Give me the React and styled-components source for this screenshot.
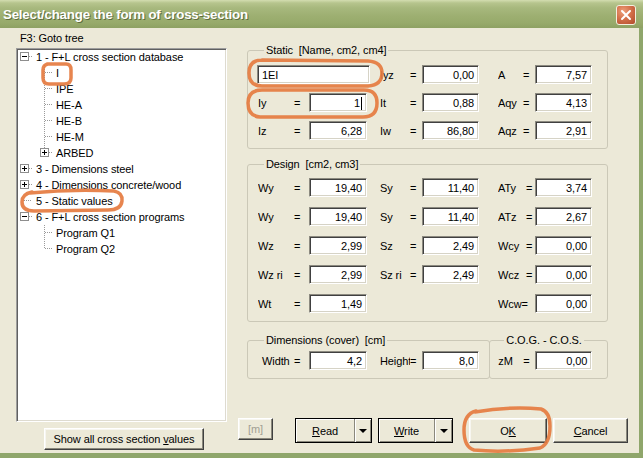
import React from 'react';
import styled, { createGlobalStyle } from 'styled-components';

const FONT = "'Liberation Sans', Arial, sans-serif";

const Global = createGlobalStyle`
  html, body { margin: 0; padding: 0; background: #ece9d8; overflow: hidden; }
  body { font-family: ${FONT}; font-size: 11px; letter-spacing: -0.1px; color: #000; }
  #root { width: 643px; height: 458px; }
  *, *::before, *::after { box-sizing: border-box; }
`;

const Window = styled.div`
  position: relative;
  width: 643px;
  height: 458px;
  display: flex;
  flex-direction: column;
  background: #ece9d8;
  overflow: hidden;
`;

const TitleBar = styled.div`
  height: 28px;
  flex: none;
  display: flex;
  align-items: center;
  justify-content: space-between;
  padding: 0 6px 0 3px;
  background: linear-gradient(to bottom, #d3ddb0 0px, #b6c48d 3px, #a7b87d 8px, #9daf71 16px, #97aa6b 23px, #8ea163 28px);
`;

const Title = styled.span`
  color: #fff;
  font-family: 'Liberation Sans', Arial, sans-serif;
  font-weight: bold;
  font-size: 13.3px;
  letter-spacing: -0.2px;
  text-shadow: 1px 1px 0 #5e6d3e;
  padding-top: 1px;
`;

const CloseBtn = styled.div`
  width: 20px;
  height: 20px;
  margin-top: 2px;
  margin-right: 1px;
  border: 1px solid #f3efe0;
  border-radius: 3px;
  background: radial-gradient(circle at 35% 30%, #eea07c 0%, #d4714b 45%, #b14a2b 100%);
  display: flex;
  align-items: center;
  justify-content: center;
`;

const Frame = styled.div`
  flex: 1;
  display: flex;
  border-right: 4px solid #8fa66b;
  border-bottom: 5px solid #8fa66b;
  min-height: 0;
`;

/* ---------- left column ---------- */

const LeftCol = styled.div`
  width: 227px;
  flex: none;
  padding: 3px 0 0 16px;
  display: flex;
  flex-direction: column;
`;

const TreeLabel = styled.div`
  padding-left: 4px;
  height: 17px;
  line-height: 15px;
`;

const TreeBox = styled.div`
  width: 211px;
  height: 374px;
  background: #fff;
  border: 1px solid;
  border-color: #9d9d9d #fff #fff #9d9d9d;
  box-shadow: inset 1px 1px 0 #606060, inset -1px -1px 0 #dedbd0;
  padding: 0 1px 1px 1px;
`;

const TreeRow = styled.div`
  display: flex;
  align-items: center;
  height: 16px;
  padding-left: ${p => p.$level * 20}px;
  white-space: nowrap;
`;

const TreeText = styled.span`
  margin-left: 4px;
  line-height: 16px;
`;

const RaisedButton = styled.div`
  display: flex;
  align-items: center;
  justify-content: center;
  background: #ece9d8;
  border: 1px solid;
  border-color: #fff #404040 #404040 #fff;
  box-shadow: inset -1px -1px 0 #8a887c, inset 1px 1px 0 #f7f6f0;
  white-space: nowrap;
  color: ${p => (p.$disabled ? '#a19f94' : '#000')};
  width: ${p => p.$w}px;
  height: ${p => p.$h}px;
  margin-left: ${p => p.$ml || 0}px;
`;

const ShowAllButton = styled(RaisedButton)`
  margin-top: 6px;
  margin-left: 28px;
`;

/* ---------- right column ---------- */

const RightCol = styled.div`
  flex: 1;
  margin-left: 11px;
  padding-top: 15px;
  display: flex;
  flex-direction: column;
`;

const Groups = styled.div`
  padding-left: 9px;
  width: 370px;
  display: flex;
  flex-direction: column;
`;

const Group = styled.fieldset`
  margin: ${p => p.$mt || 0}px 0 0 ${p => p.$ml || 0}px;
  padding: ${p => p.$pt}px 0 ${p => p.$pb}px ${p => p.$pl || 10}px;
  width: ${p => p.$w || 361}px;
  min-width: 0;
  border: 1px solid #cbc8b7;
  border-radius: 3px;
`;

const Legend = styled.legend`
  padding: 0 2px;
  margin-left: 6px;
  line-height: 14px;
  white-space: pre;
`;

const Rows = styled.div`
  display: flex;
  flex-direction: column;
  gap: ${p => p.$gap}px;
`;

const Row = styled.div`
  display: grid;
  grid-template-columns: ${p => p.$cols};
  height: 19px;
  align-items: center;
`;

const Cell = styled.div`
  display: grid;
  grid-template-columns: ${p => p.$lw}px ${p => p.$iw}px;
  align-items: center;
`;

const Label = styled.div`
  display: flex;
  align-items: center;
  white-space: nowrap;
`;

const Name = styled.span`
  width: ${p => p.$w}px;
  flex: none;
  overflow: hidden;
  padding-left: ${p => p.$pl || 0}px;
`;

const Sunken = styled.div`
  height: 19px;
  background: #fff;
  border: 1px solid;
  border-color: #8c8a80 #fff #fff #8c8a80;
  box-shadow: inset 1px 1px 0 #404040, inset -1px -1px 0 #d6d3c6;
  display: flex;
  align-items: center;
  padding: 1px 4px 0 4px;
  white-space: nowrap;
`;

const ValueBox = styled(Sunken)`
  justify-content: flex-end;
`;

const NameBox = styled(Sunken)`
  width: 113px;
  margin-left: -1px;
  justify-content: flex-start;
`;

const Caret = styled.span`
  display: inline-block;
  width: 1px;
  height: 13px;
  background: #000;
  margin-left: 1px;
`;

const DimRow = styled.div`
  display: flex;
  margin-top: 11px;
`;

const ButtonRow = styled.div`
  display: flex;
  align-items: flex-start;
  margin-top: 39px;
`;

const Split = styled.div`
  display: flex;
  height: 25px;
  margin-left: ${p => p.$ml}px;
  border: 1px solid #000;
  background: #ece9d8;
  box-shadow: inset 1px 1px 0 #fff, inset -1px -1px 0 #8a887c;
`;

const SplitMain = styled.div`
  width: ${p => p.$w}px;
  display: flex;
  align-items: center;
  justify-content: center;
`;

const SplitArrow = styled.div`
  width: ${p => p.$w}px;
  display: flex;
  align-items: center;
  justify-content: center;
  border-left: 1px solid #8a887c;
  box-shadow: inset 1px 0 0 #fff;
`;

const Tri = styled.span`
  width: 0;
  height: 0;
  border-left: 4px solid transparent;
  border-right: 4px solid transparent;
  border-top: 4px solid #000;
`;

const Annotations = styled.svg`
  position: absolute;
  top: 0;
  left: 0;
  pointer-events: none;
`;

/* ---------- tree connector drawing ---------- */

function Connector({ kind }) {
  const dot = { stroke: '#9a9a9a', strokeWidth: 1, strokeDasharray: '1 1' };
  const hasBox = kind === 'plus' || kind === 'minus' || kind === 'elbowPlus';
  return (
    <svg width="14" height="16" style={{ flex: 'none', display: 'block' }}>
      {(kind === 'tee') && <line x1="6.5" y1="0" x2="6.5" y2="16" {...dot} />}
      {(kind === 'elbow' || kind === 'elbowPlus') && <line x1="6.5" y1="0" x2="6.5" y2="8" {...dot} />}
      {(kind === 'tee' || kind === 'elbow') && <line x1="7" y1="7.5" x2="14" y2="7.5" {...dot} />}
      {kind === 'stub' && <line x1="6" y1="7.5" x2="14" y2="7.5" {...dot} />}
      {hasBox && <line x1="11" y1="7.5" x2="14" y2="7.5" {...dot} />}
      {hasBox && (
        <g>
          <rect x="2.5" y="3.5" width="8" height="8" fill="#fff" stroke="#8e8e8e" />
          <line x1="4" y1="7.5" x2="9" y2="7.5" stroke="#000" />
          {(kind === 'plus' || kind === 'elbowPlus') && <line x1="6.5" y1="5" x2="6.5" y2="10" stroke="#000" />}
        </g>
      )}
    </svg>
  );
}

const treeItems = [
  { l: 0, k: 'minus', t: '1 - F+L cross section database' },
  { l: 1, k: 'tee', t: 'I' },
  { l: 1, k: 'tee', t: 'IPE' },
  { l: 1, k: 'tee', t: 'HE-A' },
  { l: 1, k: 'tee', t: 'HE-B' },
  { l: 1, k: 'tee', t: 'HE-M' },
  { l: 1, k: 'elbowPlus', t: 'ARBED' },
  { l: 0, k: 'plus', t: '3 - Dimensions steel' },
  { l: 0, k: 'plus', t: '4 - Dimensions concrete/wood' },
  { l: 0, k: 'stub', t: '5 - Static values' },
  { l: 0, k: 'minus', t: '6 - F+L cross section programs' },
  { l: 1, k: 'tee', t: 'Program Q1' },
  { l: 1, k: 'elbow', t: 'Program Q2' },
];

/* ---------- fields ---------- */

const COLS = [
  { nw: 36, lw: 51, iw: 58 },
  { nw: 30, lw: 42, iw: 57 },
  { nw: 25, lw: 37, iw: 57 },
];
const GRID3 = '122px 118px 94px';

function Field({ f, c }) {
  if (!f) return <div />;
  const col = COLS[c];
  return (
    <Cell $lw={col.lw} $iw={col.iw}>
      <Label>
        <Name $w={f.nw || col.nw} $pl={f.pl}>{f.n}</Name>
        {f.eq !== false && <span>=</span>}
      </Label>
      <ValueBox>
        {f.v}
        {f.caret && <Caret />}
      </ValueBox>
    </Cell>
  );
}

const staticRows = [
  [null, { n: 'Iyz', v: '0,00' }, { n: 'A', v: '7,57' }],
  [{ n: 'Iy', v: '1', caret: true }, { n: 'It', v: '0,88' }, { n: 'Aqy', v: '4,13' }],
  [{ n: 'Iz', v: '6,28' }, { n: 'Iw', v: '86,80' }, { n: 'Aqz', v: '2,91' }],
];

const designRows = [
  [{ n: 'Wy', v: '19,40' }, { n: 'Sy', v: '11,40' }, { n: 'ATy', v: '3,74', nw: 28 }],
  [{ n: 'Wy', v: '19,40' }, { n: 'Sy', v: '11,40' }, { n: 'ATz', v: '2,67', nw: 28 }],
  [{ n: 'Wz', v: '2,99' }, { n: 'Sz', v: '2,49' }, { n: 'Wcy', v: '0,00', nw: 28 }],
  [{ n: 'Wz ri', v: '2,99' }, { n: 'Sz ri', v: '2,49' }, { n: 'Wcz', v: '0,00', nw: 28 }],
  [{ n: 'Wt', v: '1,49' }, null, { n: 'Wcw=', v: '0,00', eq: false, nw: 37 }],
];

export default function App() {
  const orange = { fill: 'none', stroke: '#e57b40', strokeWidth: 3.5, strokeLinecap: 'round', strokeLinejoin: 'round', opacity: 0.92 };
  return (
    <Window>
      <Global />
      <TitleBar>
        <Title>Select/change the form of cross-section</Title>
        <CloseBtn>
          <svg width="12" height="12" viewBox="0 0 12 12">
            <path d="M2 2 L10 10 M10 2 L2 10" stroke="#fff" strokeWidth="2" strokeLinecap="round" />
          </svg>
        </CloseBtn>
      </TitleBar>
      <Frame>
        <LeftCol>
          <TreeLabel>F3: Goto tree</TreeLabel>
          <TreeBox>
            {treeItems.map((it, i) => (
              <TreeRow key={i} $level={it.l}>
                <Connector kind={it.k} />
                <TreeText>{it.t}</TreeText>
              </TreeRow>
            ))}
          </TreeBox>
          <ShowAllButton $w={160} $h={22}>
            Show all cross section&nbsp;<u>v</u>alues
          </ShowAllButton>
        </LeftCol>

        <RightCol>
          <Groups>
            <Group $pt={8} $pb={8}>
              <Legend>{'Static  [Name, cm2, cm4]'}</Legend>
              <Rows $gap={9}>
                {staticRows.map((r, i) => (
                  <Row key={i} $cols={GRID3}>
                    {i === 0 ? (
                      <div><NameBox>1EI</NameBox></div>
                    ) : (
                      <Field f={r[0]} c={0} />
                    )}
                    <Field f={r[1]} c={1} />
                    <Field f={r[2]} c={2} />
                  </Row>
                ))}
              </Rows>
            </Group>

            <Group $mt={8} $pt={7} $pb={8}>
              <Legend>{'Design  [cm2, cm3]'}</Legend>
              <Rows $gap={10}>
                {designRows.map((r, i) => (
                  <Row key={i} $cols={GRID3}>
                    <Field f={r[0]} c={0} />
                    <Field f={r[1]} c={1} />
                    <Field f={r[2]} c={2} />
                  </Row>
                ))}
              </Rows>
            </Group>

            <DimRow>
              <Group $w={244} $pt={4} $pb={8}>
                <Legend>{'Dimensions (cover)  [cm]'}</Legend>
                <Row $cols="122px 118px">
                  <Field f={{ n: 'Width', v: '4,2', pl: 4 }} c={0} />
                  <Field f={{ n: 'Height', v: '8,0' }} c={1} />
                </Row>
              </Group>
              <Group $w={119} $ml={-1} $pl={8} $pt={4} $pb={8}>
                <Legend>C.O.G. - C.O.S.</Legend>
                <Row $cols="94px">
                  <Field f={{ n: 'zM', v: '0,00' }} c={2} />
                </Row>
              </Group>
            </DimRow>
          </Groups>

          <ButtonRow>
            <RaisedButton $w={35} $h={22} $disabled>[m]</RaisedButton>
            <Split $ml={22}>
              <SplitMain $w={58}><span><u>R</u>ead</span></SplitMain>
              <SplitArrow $w={17}><Tri /></SplitArrow>
            </Split>
            <Split $ml={6}>
              <SplitMain $w={55}><span><u>W</u>rite</span></SplitMain>
              <SplitArrow $w={18}><Tri /></SplitArrow>
            </Split>
            <RaisedButton $w={78} $h={25} $ml={16}><span>O<u>K</u></span></RaisedButton>
            <RaisedButton $w={75} $h={25} $ml={6}><span><u>C</u>ancel</span></RaisedButton>
          </ButtonRow>
        </RightCol>
      </Frame>

      <Annotations width="643" height="458" viewBox="0 0 643 458">
        <path d="M47 64 L66 64 Q71 64 71 70 L71 78 Q71 84 64 84 L49 84 Q43 84 43 78 L43 70 Q43 65 48 64" {...orange} />
        <path d="M30 193 Q70 189 114 191 Q123 193 122 201 Q121 210 108 210 L34 211 Q22 211 22 202 Q22 194 32 192" {...orange} />
        <path d="M262 60 L368 61 Q382 62 382 73 Q382 85 368 86 L262 86 Q249 86 249 73 Q249 60 262 60" {...orange} />
        <path d="M262 90 L364 90 Q377 90 377 103 Q377 117 363 117 L260 117 Q248 116 248 103 Q248 90 262 90" {...orange} />
        <path d="M475 412 Q510 406 541 409 Q550 412 550 426 Q550 444 540 448 Q505 453 474 450 Q464 447 464 430 Q464 414 476 411" {...orange} />
      </Annotations>
    </Window>
  );
}
